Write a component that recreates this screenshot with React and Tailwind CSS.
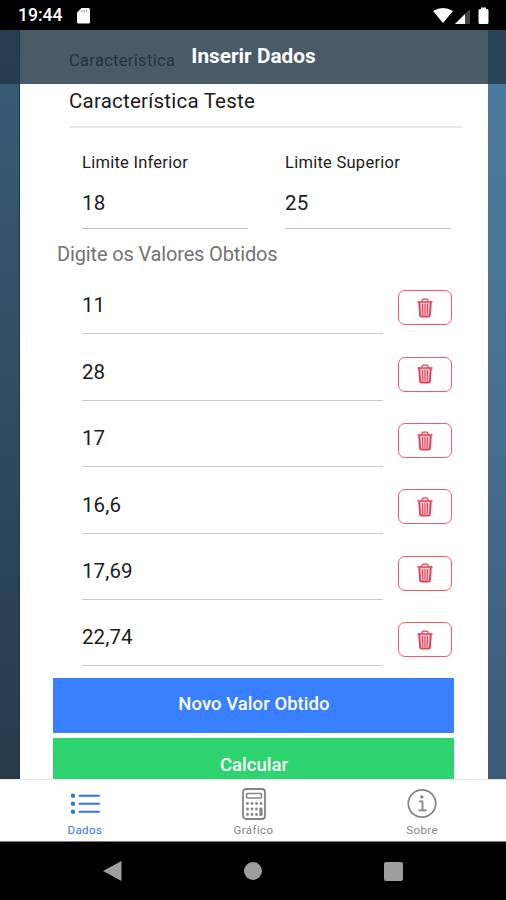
import React from "react";

const VALUES = ["11", "28", "17", "16,6", "17,69", "22,74"];

function TrashIcon() {
  return (
    <svg width="18" height="20" viewBox="0 0 18 20" fill="none" stroke="#e0405a">
      <path d="M3 4.5h12l-1 13q-.1 1.300-1.400 1.300H5.400Q4.100 18.800 4 17.500Z" fill="#f9ccd3" stroke="none" />
      <path d="M1.500 4h15" strokeWidth="1.600" />
      <path d="M5.800 3.500Q6 1.200 7.500 1.200h3q1.500 0 1.700 2.300" strokeWidth="1.200" />
      <path d="M3.200 4.500l.9 12.700q.1 1.300 1.400 1.300h7q1.300 0 1.400-1.300L14.800 4.500" strokeWidth="1.900" />
      <path d="M6.500 6l.3 11M9 6v11M11.500 6l-.3 11" strokeWidth="1.100" />
    </svg>
  );
}

function StatusBar() {
  return (
    <div className="flex h-[30px] items-center bg-black pl-[18px] pr-[16px] pt-[2px] text-white">
      <span className="text-[17.500px] font-medium leading-none">19:44</span>
      <svg className="ml-[15px]" width="13" height="16" viewBox="0 0 13 16">
        <path d="M4.500 0H11.500Q13 0 13 1.500V14Q13 15.500 11.500 15.500H1.500Q0 15.500 0 14V4.500Z" fill="#fff" />
        <path d="M5 2v2.500M7.300 2v2.500M9.700 2v2.500" stroke="#999" strokeWidth="1" />
      </svg>
      <div className="ml-auto flex items-center">
        <svg width="57" height="18" viewBox="0 0 57 18">
          <path d="M0 4Q10 -2 20 4L10 16Z" fill="#fff" />
          <path d="M22 17L37 2V17Z" fill="#444" />
          <path d="M22 17L32 7V17Z" fill="#fff" />
          <path d="M48 2V.5h5V2h1q1.500 0 1.500 1.500V15.500q0 1.500-1.500 1.500h-7q-1.500 0-1.500-1.500V3.500q0-1.500 1.500-1.500Z" fill="#fff" />
        </svg>
      </div>
    </div>
  );
}

function Limit({ label, value }) {
  return (
    <div className="w-[166px]">
      <div className="h-[24px] text-[16.500px] leading-[24px] tracking-[0.260px] text-[#1c1c1c]">{label}</div>
      <div className="h-[54px] border-b border-[#c0c0c0] pt-[4px] text-[20.500px] leading-[48px] tracking-[0.2px] text-[#1c1c1c]">{value}</div>
    </div>
  );
}

function ValueRow({ value }) {
  return (
    <div className="flex h-[66.400px] pl-[62px]">
      <div className="h-full w-[301px] border-b border-[#c8c8c8] pt-[24.400px] text-[20.500px] leading-[26px] tracking-[0.1px] text-[#1c1c1c]">{value}</div>
      <button className="ml-[15px] mt-[22.300px] flex h-[35px] w-[54px] items-center justify-center rounded-[7px] border-[1.500px] border-[#ec5a6e]">
        <TrashIcon />
      </button>
    </div>
  );
}

function Tab({ label, active, children }) {
  return (
    <div className={active ? "flex flex-1 flex-col items-center text-[#2d73f5]" : "flex flex-1 flex-col items-center text-[#858585]"}>
      <div className="flex h-[40px] items-end justify-center pt-1 pl-px">{children}</div>
      <span className="mt-[3px] pl-px text-[11.500px] leading-[14px] tracking-[0.4px]">{label}</span>
    </div>
  );
}

export default function App() {
  return (
    <div className="flex h-[900px] w-[506px] flex-col overflow-hidden bg-black font-['Roboto','Liberation_Sans',sans-serif]">
      <StatusBar />
      <main className="relative h-[749px] overflow-hidden bg-linear-to-b from-[#385e79] to-[#273a4a]">
        <div className="absolute inset-y-0 right-0 w-[18px] bg-linear-to-b from-[#4d7ca2] via-[#486f92] to-[#3a5a75]" />
        <div className="absolute inset-y-0 left-[19px] w-px bg-[#153a54]" />
        <div className="relative ml-[20px] h-full w-[468px] bg-white">
          <div className="ml-[49px] w-[394px] border-b-2 border-[#e8e8e8] pt-[18px]">
            <div className="h-[24px] text-[16.500px] leading-[25px] tracking-[0.300px] text-[#1c1c1c]">Característica</div>
            <div className="h-[54px] pt-[16px] text-[20.500px] leading-[26px] tracking-[0.220px] text-[#1c1c1c]">Característica Teste</div>
          </div>
          <div className="ml-[62px] mt-[23px] flex gap-[37px]">
            <Limit label="Limite Inferior" value="18" />
            <Limit label="Limite Superior" value="25" />
          </div>
          <div className="ml-[37px] mt-[11px] h-[28px] text-[20px] leading-[28px] tracking-[-0.150px] text-[#737373]">Digite os Valores Obtidos</div>
          <div>
            {VALUES.map((v) => <ValueRow key={v} value={v} />)}
          </div>
          <button className="ml-[33px] mt-[12px] block h-[55px] w-[401px] bg-[#3880ff] pb-[1px] pl-px text-[18.500px] font-medium tracking-[0.050px] text-white">Novo Valor Obtido</button>
          <button className="ml-[33px] mt-[5px] block h-[55px] w-[401px] bg-[#2dd36f] pl-px text-[18.500px] font-medium text-white">Calcular</button>
        </div>
        <header className="absolute inset-x-0 top-0 flex h-[54px] items-center justify-center bg-[#223747]/82 pl-px text-[20.800px] font-bold text-white">
          Inserir Dados
        </header>
      </main>
      <nav className="flex h-[63px] border-b border-t border-b-[#777] border-t-[#e8e8e8] bg-white">
        <Tab label="Dados" active>
          <svg width="32" height="32" viewBox="0 0 32 32" stroke="#2d73f5" strokeWidth="2">
            <path d="M10.500 7.700h19.500M10.500 15.800h19.500M10.500 23.800h19.500" strokeLinecap="round" />
            <g fill="#2d73f5" stroke="none">
              <circle cx="4" cy="7.700" r="2.200" />
              <circle cx="4" cy="15.800" r="2.200" />
              <circle cx="4" cy="23.800" r="2.200" />
            </g>
          </svg>
        </Tab>
        <Tab label="Gráfico">
          <svg width="24" height="32" viewBox="0 0 24 32" fill="none" stroke="#858585">
            <rect x="1" y="1" width="22" height="30" rx="3" strokeWidth="1.800" />
            <rect x="4.500" y="5.500" width="15" height="4.500" rx="1" strokeWidth="1.600" />
            <g fill="#858585" stroke="none">
              <circle cx="5.500" cy="15.500" r="1.400" /><circle cx="10" cy="15.500" r="1.400" /><circle cx="14.500" cy="15.500" r="1.400" /><circle cx="19" cy="15.500" r="1.400" />
              <circle cx="5.500" cy="21" r="1.400" /><circle cx="10" cy="21" r="1.400" /><circle cx="14.500" cy="21" r="1.400" />
              <circle cx="5.500" cy="26.500" r="1.400" /><circle cx="10" cy="26.500" r="1.400" /><circle cx="14.500" cy="26.500" r="1.400" />
              <rect x="17.300" y="19.500" width="3.300" height="8.500" rx="1.300" />
            </g>
          </svg>
        </Tab>
        <Tab label="Sobre">
          <svg width="30" height="32" viewBox="0 0 30 32" fill="none" stroke="#858585">
            <circle cx="15" cy="15.500" r="13.700" strokeWidth="1.800" />
            <circle cx="14.800" cy="9" r="1.700" fill="#858585" stroke="none" />
            <path d="M12 13.300h3.500v9M11.500 22.300h8" strokeWidth="1.800" />
          </svg>
        </Tab>
      </nav>
      <footer className="flex h-[58px] items-center bg-black">
        <svg className="ml-[103px]" width="19" height="20" viewBox="0 0 19 20"><path d="M18.500 0V20L0 10Z" fill="#9e9e9e" /></svg>
        <div className="ml-[122px] size-[18px] rounded-full bg-[#9e9e9e]" />
        <div className="ml-[122px] size-[19px] rounded-[2px] bg-[#9e9e9e]" />
      </footer>
    </div>
  );
}
